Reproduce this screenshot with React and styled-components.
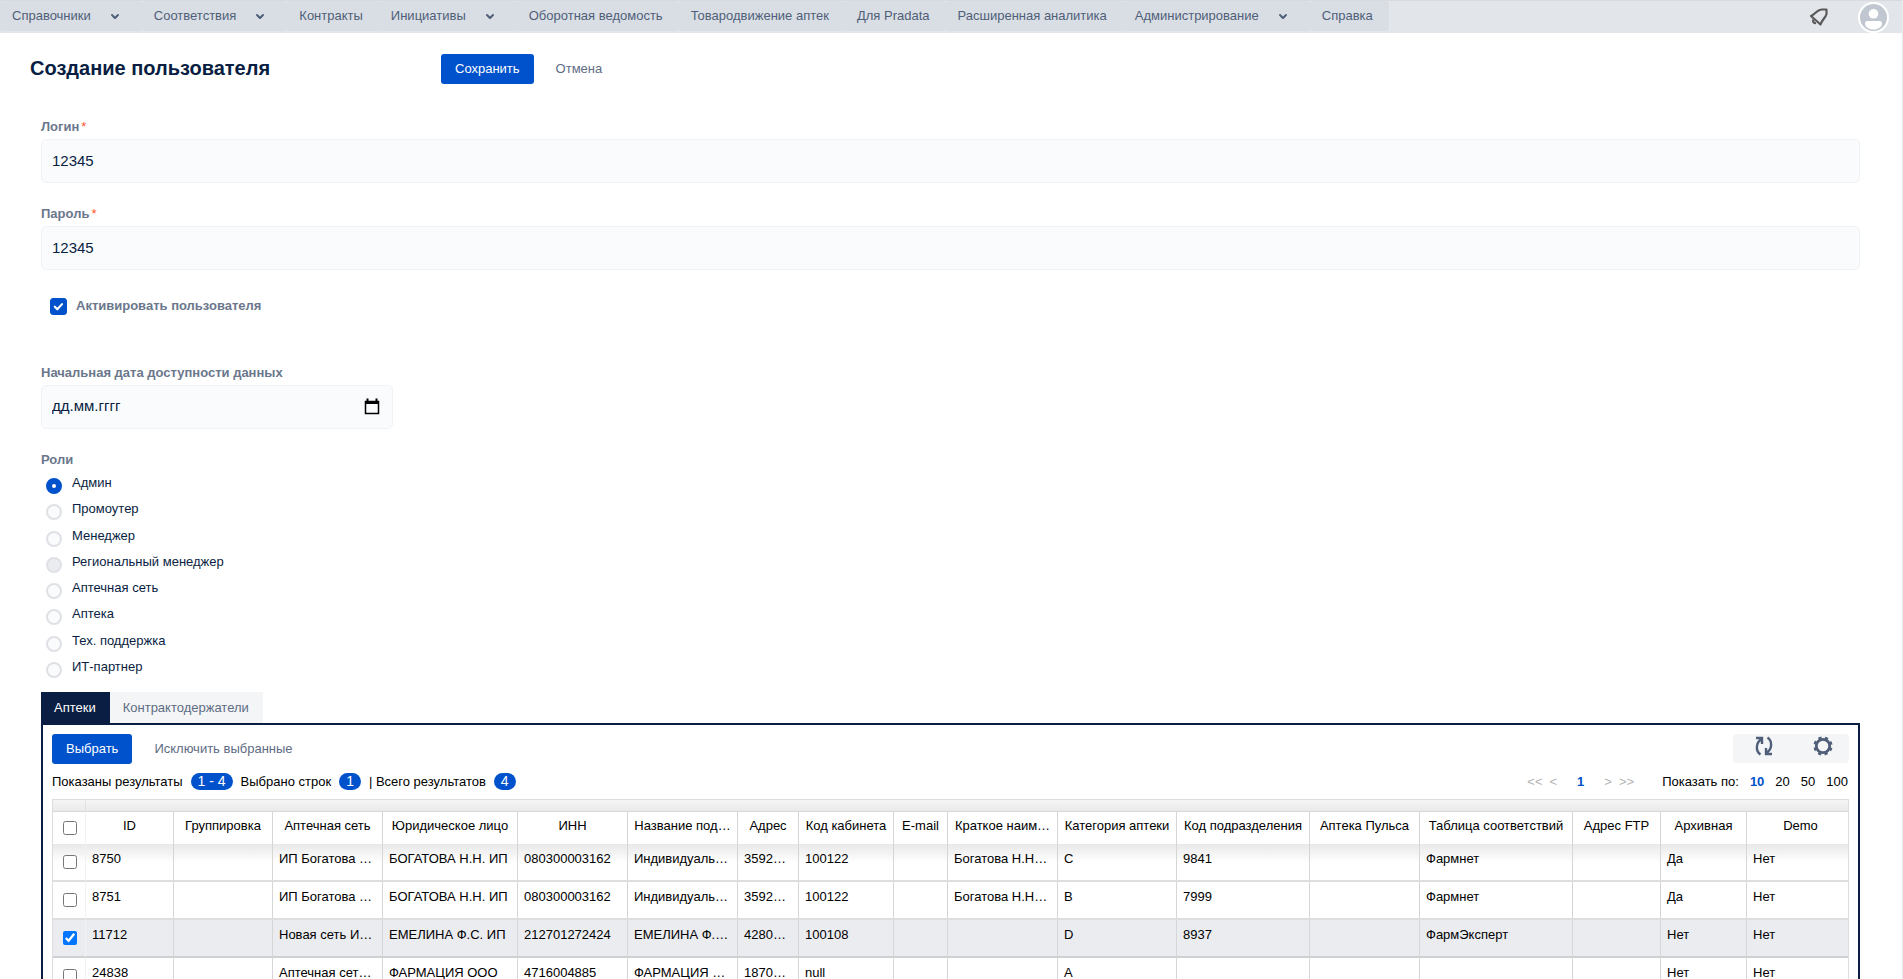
import React, { useState } from "react";
import styled, { createGlobalStyle, css } from "styled-components";

const GlobalStyle = createGlobalStyle`
  *, *::before, *::after {
    box-sizing: border-box;
  }

  body {
    margin: 0;
    color: #091e42;
    background: #fff;
    font-family: "Liberation Sans", Arial, sans-serif;
    font-size: 13px;
    line-height: 16px;
  }

  button, input {
    font: inherit;
    color: inherit;
  }
`;

const Page = styled.div`
  height: 100vh;
  overflow: hidden auto;
  scrollbar-width: none;
  border-right: 1px solid #ebecf0;
`;

// Top navigation
const TopBar = styled.header`
  display: flex;
  justify-content: space-between;
  height: 33px;
  background: #e2e5e9;
  border-top: 1px solid #d8dadd;
`;

const Menu = styled.nav`
  display: flex;
  align-items: flex-start;
`;

const MenuButton = styled.button`
  display: flex;
  align-items: center;
  height: 30px;
  padding: 0 ${(p) => (p.$wide ? 15 : 16)}px 0 12px;
  border: none;
  border-radius: 3px;
  background: #d9dee4;
  color: #505f79;
  white-space: nowrap;
  cursor: pointer;

  svg {
    margin-left: 12px;
  }
`;

const TopActions = styled.div`
  display: flex;
  align-items: center;
  gap: 28px;
  padding-right: 13px;
`;

const IconButton = styled.button`
  display: flex;
  padding: 0;
  border: none;
  background: none;
  color: ${(p) => p.$color || "#505f79"};
  cursor: pointer;
`;

// Page title
const TitleRow = styled.div`
  display: flex;
  align-items: center;
  padding: 21px 30px 0;
`;

const Title = styled.h1`
  flex: 0 0 411px;
  margin: 0;
  padding-bottom: 2px;
  font-size: 20px;
  line-height: 24px;
`;

const Button = styled.button`
  height: 30px;
  padding: 0 ${(p) => (p.$subtle ? 22 : 14)}px;
  border: none;
  border-radius: 3px;
  background: ${(p) => (p.$subtle ? "none" : "#0052cc")};
  color: ${(p) => (p.$subtle ? "#5e6c84" : "#fff")};
  cursor: pointer;
`;

// Form
const Form = styled.form`
  padding: 35px 42px 20px 41px;
`;

const Field = styled.div`
  margin-bottom: 23px;
`;

const labelStyle = css`
  color: #6b778c;
  font-weight: bold;
`;

const Label = styled.label`
  display: block;
  margin-bottom: 4px;
  ${labelStyle}
`;

const Required = styled.span`
  padding-left: 2px;
  color: #ff5630;
  font-weight: normal;
`;

const boxStyle = css`
  height: 44px;
  padding: 0 12px 2px 10px;
  border: 1px solid #f1f2f5;
  border-radius: 5px;
  background: #fafbfc;
`;

const Input = styled.input`
  display: block;
  width: 100%;
  font-size: 15px;
  ${boxStyle}
`;

const DateBox = styled.div`
  display: flex;
  align-items: center;
  width: 352px;
  ${boxStyle}
`;

const DateInput = styled.input`
  flex: 1;
  min-width: 0;
  padding: 0;
  border: none;
  outline: none;
  background: none;
  font-size: 15px;

  &::placeholder {
    color: #091e42;
    opacity: 1;
  }
`;

const ActiveRow = styled.div`
  display: flex;
  align-items: center;
  gap: 9px;
  height: 16px;
  margin: 28px 0 51px;
  padding-left: 9px;

  label {
    ${labelStyle}
  }
`;

const ActiveCheckbox = styled.input`
  appearance: none;
  width: 17px;
  height: 17px;
  margin: 0;
  border: 1px solid #dfe1e6;
  border-radius: 3px;

  &:checked {
    border-color: #0052cc;
    background: #0052cc
      url("data:image/svg+xml,%3Csvg xmlns='http://www.w3.org/2000/svg' viewBox='0 0 14 14' fill='none' stroke='white' stroke-width='2' stroke-linecap='round' stroke-linejoin='round'%3E%3Cpath d='M3.5 7.2l2.4 2.4 4.4-4.8'/%3E%3C/svg%3E")
      center / 15px;
  }
`;

const Roles = styled.fieldset`
  display: flex;
  flex-direction: column;
  min-width: 0;
  margin: 0 0 13px;
  padding: 0;
  border: none;

  legend {
    margin-bottom: 3px;
    padding: 0;
    ${labelStyle}
  }
`;

const RoleList = styled.div`
  display: flex;
  flex-direction: column;
  justify-content: space-between;
  height: 208px;
`;

const Role = styled.label`
  display: flex;
  align-items: flex-start;
  gap: 10px;
  padding-left: 5px;
  line-height: 24px;
`;

const Radio = styled.input`
  appearance: none;
  width: 16px;
  height: 16px;
  margin: 7px 0 0;
  border: 2px solid #dfe1e6;
  border-radius: 50%;
  background: #fafbfc;

  &:checked {
    border: 6px solid #0052cc;
    background: #fff;
  }

  &:hover {
    cursor: pointer;
  }

  ${(p) => p.$muted && "background: #ebecf0;"}
`;

// Tabs and panel
const Tabs = styled.div`
  display: flex;
`;

const Tab = styled.button`
  height: 31px;
  padding: 0 14px 0 13px;
  border: none;
  background: ${(p) => (p.$active ? "#091e42" : "#f4f5f7")};
  color: ${(p) => (p.$active ? "#fff" : "#5e6c84")};
`;

const Panel = styled.section`
  padding: 9px;
  border: 2px solid #091e42;
  color: #000;
`;

const Toolbar = styled.div`
  display: flex;
  justify-content: space-between;
`;

const ToolGroup = styled.div`
  display: flex;
  justify-content: space-between;
  width: 116px;
  height: 29px;
  padding: 0 14px 4px 19px;
  border-radius: 4px;
  background: #f4f5f7;
`;

const StatusRow = styled.div`
  display: flex;
  justify-content: space-between;
  align-items: center;
  height: 17px;
  margin: 9px 0;
`;

const Summary = styled.div`
  display: flex;
  align-items: center;
`;

const Badge = styled.span`
  height: 17px;
  margin: 0 8px;
  padding: 0 7px;
  border-radius: 9px;
  background: #0052cc;
  color: #fff;
  font-size: 14px;
  line-height: 17px;
`;

const Pager = styled.div`
  display: flex;
  align-items: center;
  gap: 7px;
  padding-right: 1px;
`;

const PageButton = styled.button`
  padding: 0;
  border: none;
  background: none;
  color: ${(p) => (p.$active ? "#0052cc" : p.disabled ? "#b3b3b3" : "#000")};
  font-weight: ${(p) => (p.$active ? "bold" : "normal")};
`;

const PageNumber = styled.div`
  padding: 0 13px;
`;

const PageSizes = styled.div`
  display: flex;
  gap: 11px;
  padding-left: 21px;
`;

// Table
const Grid = styled.table`
  width: 100%;
  table-layout: fixed;
  border-collapse: separate;
  border-spacing: 0;
  border: 1px solid #ddd;
`;

const FilterCell = styled.td`
  height: 11px;
  padding: 0;
  background: linear-gradient(#f5f5f5, #eaeaea);
  border-right: ${(p) => (p.$first ? "1px solid #e2e2e2" : "none")};
`;

const cellStyle = css`
  border-right: 1px solid #d6d6d6;
  font-weight: normal;
  white-space: nowrap;
  vertical-align: top;

  &:first-child {
    padding: 0 4px 0 6px;
    border-right-color: #f2f2f2;
    text-align: center;
  }

  &:last-child {
    border-right: none;
  }
`;

const HeadCell = styled.th`
  height: 33px;
  padding: 0;
  border-top: 1px solid #d6d6d6;
  line-height: 28px;
  text-align: center;
  ${cellStyle}

  &:last-child {
    padding-left: 6px;
  }
`;

const Row = styled.tr`
  background: ${(p) => (p.$selected ? "#ebecf0" : "#fff")};
`;

const Cell = styled.td`
  height: 38px;
  padding: 0 0 0 6px;
  border-bottom: 2px solid ${(p) => (p.$selected ? "#cfd0d3" : "#dedede")};
  line-height: 30px;
  ${cellStyle}
  ${(p) => p.$shaded && "background: linear-gradient(#e8e8e8, #fff 18px);"}
`;

const RowCheckbox = styled.input`
  display: block;
  width: 14px;
  height: 14px;
  margin: ${(p) => (p.$head ? 9 : 11)}px auto 0;
`;

const ChevronIcon = () => (
  <svg width="24" height="24" viewBox="0 0 24 24" fill="currentColor">
    <path d="M8.292 10.293a1.009 1.009 0 000 1.419l2.939 2.965c.218.215.5.322.779.322s.556-.107.769-.322l2.93-2.955a1.01 1.01 0 000-1.419.987.987 0 00-1.406 0l-2.298 2.317-2.307-2.327a.99.99 0 00-1.406 0z" />
  </svg>
);

const BellIcon = () => (
  <svg width="24" height="24" viewBox="0 0 24 24" fill="none" stroke="currentColor" strokeWidth="2.2">
    <path d="M5 11C9 9.5 10.500 5 15.500 4.500L20.500 4.500L20.500 9C19.500 13 16 14.500 14.500 19.500Z" strokeLinejoin="round" />
    <path d="M7.500 14.500C6.300 16.500 7.500 18.500 10 18" />
  </svg>
);

const AvatarIcon = () => (
  <svg width="31" height="31" viewBox="0 0 31 31">
    <circle cx="15.5" cy="15.5" r="15.5" fill="#fff" />
    <circle cx="15.5" cy="15.5" r="13.5" fill="#c1c7d0" />
    <circle cx="15.5" cy="11.8" r="4.8" fill="#fff" />
    <path d="M7 21.500a2.500 2.500 0 012.500-2.500h12a2.500 2.500 0 012.500 2.500c0 3.500-4 6-8.500 6s-8.500-2.500-8.500-6z" fill="#fff" />
  </svg>
);

const CalendarIcon = () => (
  <svg width="16" height="17" viewBox="0 0 16 17" fill="none" stroke="#000">
    <path d="M1.500 3.500h13v12h-13z" strokeWidth="1.500" />
    <path d="M1 4.500h14" strokeWidth="3" />
    <path d="M3.500 0.500v3M12.500 0.500v3" strokeWidth="2" />
  </svg>
);

const RefreshIcon = () => (
  <svg width="24" height="24" viewBox="0 0 24 24" fill="none" stroke="currentColor" strokeWidth="2.4">
    <path d="M8.500 20.500C3.500 17 3.500 9 9.500 5M4 4h6v6" />
    <path d="M15.500 3.500C20.500 7 20.500 15 14.500 19M20 20h-6v-6" />
  </svg>
);

const GearIcon = () => (
  <svg width="24" height="24" viewBox="0 0 24 24" fill="none" stroke="currentColor">
    <circle cx="12" cy="12" r="6.700" strokeWidth="2.800" />
    <circle cx="12" cy="12" r="8.400" strokeWidth="2.400" strokeDasharray="3.200 3.397" strokeDashoffset="-1.700" />
  </svg>
);

const menuItems = [
  { title: "Справочники", dropdown: true },
  { title: "Соответствия", dropdown: true },
  { title: "Контракты" },
  { title: "Инициативы", dropdown: true },
  { title: "Оборотная ведомость" },
  { title: "Товародвижение аптек" },
  { title: "Для Pradata" },
  { title: "Расширенная аналитика" },
  { title: "Администрирование", dropdown: true },
  { title: "Справка" },
];

const roles = [
  "Админ",
  "Промоутер",
  "Менеджер",
  "Региональный менеджер",
  "Аптечная сеть",
  "Аптека",
  "Тех. поддержка",
  "ИТ-партнер",
];

const columns = [
  { title: "ID", width: 88 },
  { title: "Группировка", width: 99 },
  { title: "Аптечная сеть", width: 110 },
  { title: "Юридическое лицо", width: 135 },
  { title: "ИНН", width: 110 },
  { title: "Название под…", width: 110 },
  { title: "Адрес", width: 61 },
  { title: "Код кабинета", width: 95 },
  { title: "E-mail", width: 54 },
  { title: "Краткое наим…", width: 110 },
  { title: "Категория аптеки", width: 119 },
  { title: "Код подразделения", width: 133 },
  { title: "Аптека Пульса", width: 110 },
  { title: "Таблица соответствий", width: 153 },
  { title: "Адрес FTP", width: 88 },
  { title: "Архивная", width: 86 },
  { title: "Demo" },
];

const rows = [
  ["8750", "", "ИП Богатова …", "БОГАТОВА Н.Н. ИП", "080300003162", "Индивидуаль…", "3592…", "100122", "", "Богатова Н.Н…", "C", "9841", "", "Фармнет", "", "Да", "Нет"],
  ["8751", "", "ИП Богатова …", "БОГАТОВА Н.Н. ИП", "080300003162", "Индивидуаль…", "3592…", "100122", "", "Богатова Н.Н…", "B", "7999", "", "Фармнет", "", "Да", "Нет"],
  ["11712", "", "Новая сеть И…", "ЕМЕЛИНА Ф.С. ИП", "212701272424", "ЕМЕЛИНА Ф.…", "4280…", "100108", "", "", "D", "8937", "", "ФармЭксперт", "", "Нет", "Нет"],
  ["24838", "", "Аптечная сет…", "ФАРМАЦИЯ ООО", "4716004885", "ФАРМАЦИЯ …", "1870…", "null", "", "", "A", "", "", "", "", "Нет", "Нет"],
];

const PharmacyTable = () => {
  const [selected, setSelected] = useState(["11712"]);

  const toggle = (id) => {
    setSelected(selected.includes(id) ? selected.filter((s) => s !== id) : [...selected, id]);
  };

  const toggleAll = () => {
    setSelected(selected.length === rows.length ? [] : rows.map((r) => r[0]));
  };

  return (
    <Grid>
      <colgroup>
        <col width="33" />
        {columns.map((c) => (
          <col key={c.title} width={c.width} />
        ))}
      </colgroup>
      <thead>
        <tr>
          <FilterCell $first />
          <FilterCell colSpan={columns.length} />
        </tr>
        <tr>
          <HeadCell>
            <RowCheckbox
              $head
              type="checkbox"
              aria-label="Выбрать все"
              checked={selected.length === rows.length}
              onChange={toggleAll}
            />
          </HeadCell>
          {columns.map((c) => (
            <HeadCell key={c.title}>{c.title}</HeadCell>
          ))}
        </tr>
      </thead>
      <tbody>
        {rows.map((row, i) => {
          const isSelected = selected.includes(row[0]);
          return (
            <Row key={row[0]} $selected={isSelected}>
              <Cell $selected={isSelected} $shaded={i === 0}>
                <RowCheckbox
                  type="checkbox"
                  aria-label={row[0]}
                  checked={isSelected}
                  onChange={() => toggle(row[0])}
                />
              </Cell>
              {row.map((value, j) => (
                <Cell key={j} $selected={isSelected} $shaded={i === 0}>
                  {value}
                </Cell>
              ))}
            </Row>
          );
        })}
      </tbody>
    </Grid>
  );
};

const App = () => {
  const [login, setLogin] = useState("12345");
  const [password, setPassword] = useState("12345");
  const [active, setActive] = useState(true);
  const [date, setDate] = useState("");
  const [role, setRole] = useState("Админ");
  const [tab, setTab] = useState("Аптеки");

  return (
    <Page>
      <GlobalStyle />
      <TopBar>
        <Menu>
          {menuItems.map((item) => (
            <MenuButton key={item.title} type="button" $wide={item.dropdown}>
              {item.title}
              {item.dropdown && <ChevronIcon />}
            </MenuButton>
          ))}
        </Menu>
        <TopActions>
          <IconButton type="button" aria-label="Уведомления" $color="#5a5a5a">
            <BellIcon />
          </IconButton>
          <IconButton type="button" aria-label="Профиль">
            <AvatarIcon />
          </IconButton>
        </TopActions>
      </TopBar>

      <TitleRow>
        <Title>Создание пользователя</Title>
        <Button type="submit" form="user-form">Сохранить</Button>
        <Button type="button" $subtle>Отмена</Button>
      </TitleRow>

      <Form id="user-form" onSubmit={(e) => e.preventDefault()}>
        <Field>
          <Label htmlFor="login">Логин<Required>*</Required></Label>
          <Input id="login" type="text" value={login} onChange={(e) => setLogin(e.target.value)} required />
        </Field>
        <Field>
          <Label htmlFor="password">Пароль<Required>*</Required></Label>
          <Input id="password" type="text" value={password} onChange={(e) => setPassword(e.target.value)} required />
        </Field>

        <ActiveRow>
          <ActiveCheckbox
            id="active"
            type="checkbox"
            checked={active}
            onChange={(e) => setActive(e.target.checked)}
          />
          <label htmlFor="active">Активировать пользователя</label>
        </ActiveRow>

        <Field>
          <Label htmlFor="date">Начальная дата доступности данных</Label>
          <DateBox>
            <DateInput
              id="date"
              type="text"
              placeholder="дд.мм.гггг"
              value={date}
              onChange={(e) => setDate(e.target.value)}
            />
            <IconButton type="button" aria-label="Открыть календарь">
              <CalendarIcon />
            </IconButton>
          </DateBox>
        </Field>

        <Roles>
          <legend>Роли</legend>
          <RoleList>
            {roles.map((name) => (
              <Role key={name}>
                <Radio
                  type="radio"
                  name="role"
                  checked={role === name}
                  onChange={() => setRole(name)}
                  $muted={name === "Региональный менеджер"}
                />
                {name}
              </Role>
            ))}
          </RoleList>
        </Roles>

        <Tabs role="tablist">
          {["Аптеки", "Контрактодержатели"].map((name) => (
            <Tab
              key={name}
              type="button"
              role="tab"
              aria-selected={tab === name}
              $active={tab === name}
              onClick={() => setTab(name)}
            >
              {name}
            </Tab>
          ))}
        </Tabs>
        <Panel>
          <Toolbar>
            <div>
              <Button type="button">Выбрать</Button>
              <Button type="button" $subtle>Исключить выбранные</Button>
            </div>
            <ToolGroup>
              <IconButton type="button" aria-label="Обновить">
                <RefreshIcon />
              </IconButton>
              <IconButton type="button" aria-label="Настройки">
                <GearIcon />
              </IconButton>
            </ToolGroup>
          </Toolbar>
          <StatusRow>
            <Summary>
              Показаны результаты <Badge>1 - 4</Badge>
              Выбрано строк <Badge>1</Badge>
              | Всего результатов <Badge>4</Badge>
            </Summary>
            <Pager>
              <PageButton type="button" disabled>&lt;&lt;</PageButton>
              <PageButton type="button" disabled>&lt;</PageButton>
              <PageNumber>
                <PageButton type="button" $active>1</PageButton>
              </PageNumber>
              <PageButton type="button" disabled>&gt;</PageButton>
              <PageButton type="button" disabled>&gt;&gt;</PageButton>
              <PageSizes>
                <span>Показать по:</span>
                <PageButton type="button" $active>10</PageButton>
                <PageButton type="button">20</PageButton>
                <PageButton type="button">50</PageButton>
                <PageButton type="button">100</PageButton>
              </PageSizes>
            </Pager>
          </StatusRow>
          <PharmacyTable />
        </Panel>
      </Form>
    </Page>
  );
};

export default App;
